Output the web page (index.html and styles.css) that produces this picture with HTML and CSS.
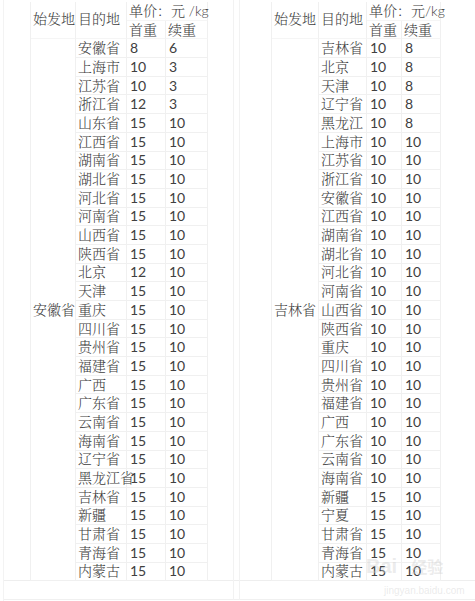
FILE: index.html
```html
<!DOCTYPE html>
<html lang="zh">
<head>
<meta charset="utf-8">
<link rel="stylesheet" href="styles.css">
</head>
<body>
<div class="page">
  <div class="sheet">
    <div class="grid left">
      <div class="c h origin">始发地</div>
      <div class="c h dest">目的地</div>
      <div class="c h price">单价：元 /kg</div>
      <div class="c h">首重</div>
      <div class="c h">续重</div>
      <div class="c o">安徽省</div>
      <div class="c">安徽省</div><div class="c n">8</div><div class="c n">6</div>
      <div class="c">上海市</div><div class="c n">10</div><div class="c n">3</div>
      <div class="c">江苏省</div><div class="c n">10</div><div class="c n">3</div>
      <div class="c">浙江省</div><div class="c n">12</div><div class="c n">3</div>
      <div class="c">山东省</div><div class="c n">15</div><div class="c n">10</div>
      <div class="c">江西省</div><div class="c n">15</div><div class="c n">10</div>
      <div class="c">湖南省</div><div class="c n">15</div><div class="c n">10</div>
      <div class="c">湖北省</div><div class="c n">15</div><div class="c n">10</div>
      <div class="c">河北省</div><div class="c n">15</div><div class="c n">10</div>
      <div class="c">河南省</div><div class="c n">15</div><div class="c n">10</div>
      <div class="c">山西省</div><div class="c n">15</div><div class="c n">10</div>
      <div class="c">陕西省</div><div class="c n">15</div><div class="c n">10</div>
      <div class="c">北京</div><div class="c n">12</div><div class="c n">10</div>
      <div class="c">天津</div><div class="c n">15</div><div class="c n">10</div>
      <div class="c">重庆</div><div class="c n">15</div><div class="c n">10</div>
      <div class="c">四川省</div><div class="c n">15</div><div class="c n">10</div>
      <div class="c">贵州省</div><div class="c n">15</div><div class="c n">10</div>
      <div class="c">福建省</div><div class="c n">15</div><div class="c n">10</div>
      <div class="c">广西</div><div class="c n">15</div><div class="c n">10</div>
      <div class="c">广东省</div><div class="c n">15</div><div class="c n">10</div>
      <div class="c">云南省</div><div class="c n">15</div><div class="c n">10</div>
      <div class="c">海南省</div><div class="c n">15</div><div class="c n">10</div>
      <div class="c">辽宁省</div><div class="c n">15</div><div class="c n">10</div>
      <div class="c">黑龙江省</div><div class="c n">15</div><div class="c n">10</div>
      <div class="c">吉林省</div><div class="c n">15</div><div class="c n">10</div>
      <div class="c">新疆</div><div class="c n">15</div><div class="c n">10</div>
      <div class="c">甘肃省</div><div class="c n">15</div><div class="c n">10</div>
      <div class="c">青海省</div><div class="c n">15</div><div class="c n">10</div>
      <div class="c">内蒙古</div><div class="c n">15</div><div class="c n">10</div>
    </div>
    <div class="divider"></div>
    <div class="grid right">
      <div class="c h origin">始发地</div>
      <div class="c h dest">目的地</div>
      <div class="c h price">单价：元/kg</div>
      <div class="c h">首重</div>
      <div class="c h">续重</div>
      <div class="c o">吉林省</div>
      <div class="c">吉林省</div><div class="c n">10</div><div class="c n">8</div>
      <div class="c">北京</div><div class="c n">10</div><div class="c n">8</div>
      <div class="c">天津</div><div class="c n">10</div><div class="c n">8</div>
      <div class="c">辽宁省</div><div class="c n">10</div><div class="c n">8</div>
      <div class="c">黑龙江</div><div class="c n">10</div><div class="c n">8</div>
      <div class="c">上海市</div><div class="c n">10</div><div class="c n">10</div>
      <div class="c">江苏省</div><div class="c n">10</div><div class="c n">10</div>
      <div class="c">浙江省</div><div class="c n">10</div><div class="c n">10</div>
      <div class="c">安徽省</div><div class="c n">10</div><div class="c n">10</div>
      <div class="c">江西省</div><div class="c n">10</div><div class="c n">10</div>
      <div class="c">湖南省</div><div class="c n">10</div><div class="c n">10</div>
      <div class="c">湖北省</div><div class="c n">10</div><div class="c n">10</div>
      <div class="c">河北省</div><div class="c n">10</div><div class="c n">10</div>
      <div class="c">河南省</div><div class="c n">10</div><div class="c n">10</div>
      <div class="c">山西省</div><div class="c n">10</div><div class="c n">10</div>
      <div class="c">陕西省</div><div class="c n">10</div><div class="c n">10</div>
      <div class="c">重庆</div><div class="c n">10</div><div class="c n">10</div>
      <div class="c">四川省</div><div class="c n">10</div><div class="c n">10</div>
      <div class="c">贵州省</div><div class="c n">10</div><div class="c n">10</div>
      <div class="c">福建省</div><div class="c n">10</div><div class="c n">10</div>
      <div class="c">广西</div><div class="c n">10</div><div class="c n">10</div>
      <div class="c">广东省</div><div class="c n">10</div><div class="c n">10</div>
      <div class="c">云南省</div><div class="c n">10</div><div class="c n">10</div>
      <div class="c">海南省</div><div class="c n">10</div><div class="c n">10</div>
      <div class="c">新疆</div><div class="c n">15</div><div class="c n">10</div>
      <div class="c">宁夏</div><div class="c n">15</div><div class="c n">10</div>
      <div class="c">甘肃省</div><div class="c n">15</div><div class="c n">10</div>
      <div class="c">青海省</div><div class="c n">15</div><div class="c n">10</div>
      <div class="c">内蒙古</div><div class="c n">15</div><div class="c n">10</div>
    </div>
  </div>
  <div class="footer"></div>
  <div class="watermark">Bai<span class="wm-cn">经验</span><div class="wm-url">jingyan.baidu.com</div></div>
</div>
</body>
</html>
```

FILE: styles.css
```css
html, body {
  margin: 0;
  padding: 0;
  background: #ffffff;
}

.page {
  position: relative;
  width: 475px;
  height: 601px;
  box-sizing: border-box;
  border-left: 1px solid #f3f3f3;
  margin-left: 3px;
  overflow: hidden;
  font-family: "Lato", "Noto Serif CJK SC", "Noto Sans CJK SC", serif;
  font-weight: 300;
  color: #404040;
}

.sheet {
  display: flex;
  align-items: flex-start;
  padding-top: 2px;
  padding-left: 26px;
  border-bottom: 1px solid #eeeeee;
  height: 581px;
  box-sizing: border-box;
}

.grid {
  display: grid;
  grid-template-rows: repeat(31, 18.7px);
  border-left: 1px solid #f0f0f0;
}

.left {
  grid-template-columns: 45px 51px 39px 42px;
}

.right {
  grid-template-columns: 47px 48px 35px 39px;
}

.divider {
  width: 5px;
  height: 600px;
  margin: -2px 31px 0 25px;
  border-left: 1px solid #f2f2f2;
  border-right: 1px solid #f2f2f2;
}

.c {
  box-sizing: border-box;
  border-right: 1px solid #f0f0f0;
  border-bottom: 1px solid #f0f0f0;
  font-size: 14px;
  line-height: 18px;
  padding-left: 2px;
  white-space: nowrap;
  overflow: visible;
  display: flex;
  align-items: center;
}

.n {
  font-size: 14px;
  font-weight: 400;
  padding-left: 3px;
}

.h {
  border-bottom-color: #f5f5f5;
}

.origin {
  grid-row: 1 / 3;
  grid-column: 1;
  padding-bottom: 2px;
}

.dest {
  grid-row: 1 / 3;
  grid-column: 2;
  padding-bottom: 2px;
}

.price {
  grid-column: 3 / 5;
}

.o {
  grid-row: 3 / 32;
  grid-column: 1;
}

.footer {
  height: 18px;
  border-bottom: 1px solid #f0f0f0;
}

.watermark {
  position: absolute;
  left: 362px;
  top: 555px;
  font-family: "Liberation Sans", "Noto Sans CJK SC", sans-serif;
  font-size: 20px;
  font-weight: bold;
  color: rgba(205, 205, 205, 0.4);
  line-height: 22px;
}

.wm-cn {
  font-size: 16px;
  margin-left: 14px;
}

.wm-url {
  font-size: 10px;
  font-weight: normal;
  line-height: 12px;
  margin-left: 18px;
  margin-top: 6px;
}
```
